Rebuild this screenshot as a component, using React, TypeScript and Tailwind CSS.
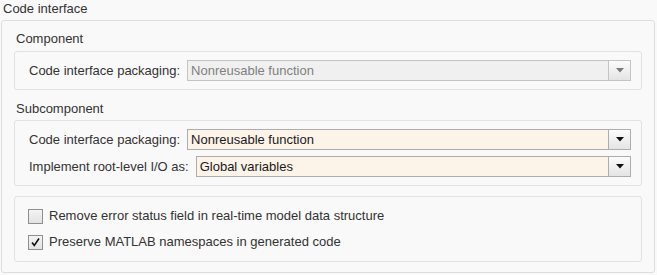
import React from 'react';

const Arrow: React.FC<{ disabled?: boolean }> = ({ disabled }) => (
  <svg width="8" height="5" viewBox="0 0 8 5">
    <polygon points="0,0 8,0 4,4.5" fill={disabled ? '#7a7a7a' : '#111'} />
  </svg>
);

const Dropdown: React.FC<{ value: string; disabled?: boolean }> = ({ value, disabled }) => (
  <div
    className={
      'flex flex-1 h-[21px] border ' +
      (disabled ? 'border-[#c4c4c4] bg-[#f0f0f0] text-[#7f7f7f]' : 'border-[#adadad] bg-[#fcf3e9] text-[#1a1a1a]')
    }
  >
    <div className="flex-1 pl-[3px] leading-[19px]">{value}</div>
    <div
      className={
        'w-[22px] flex items-center justify-center border-l bg-gradient-to-b from-[#fcfcfc] to-[#e4e4e4] ' +
        (disabled ? 'border-[#c4c4c4]' : 'border-[#adadad]')
      }
    >
      <Arrow disabled={disabled} />
    </div>
  </div>
);

const Row: React.FC<{ label: string; value: string; disabled?: boolean }> = ({ label, value, disabled }) => (
  <div className="flex items-center gap-[7px]">
    <span className="text-[#333]">{label}</span>
    <Dropdown value={value} disabled={disabled} />
  </div>
);

const Check: React.FC<{ checked?: boolean; label: string }> = ({ checked, label }) => (
  <div className="flex items-center h-[20px] gap-[6px]">
    <div className="w-[15px] h-[15px] border border-[#8f8f8f] bg-gradient-to-b from-[#f4f4f4] to-[#e2e2e2] flex items-center justify-center">
      {checked && (
        <svg width="11" height="11" viewBox="0 0 11 11">
          <path d="M2 5.5 L4.3 8.5 L9 1.5" stroke="#111" strokeWidth="1.6" fill="none" />
        </svg>
      )}
    </div>
    <span className="text-[#333]">{label}</span>
  </div>
);

const App: React.FC = () => {
  return (
    <div
      className="w-[657px] h-[275px] bg-[#f9f9f9] text-[13px] overflow-hidden"
      style={{ fontFamily: '"Liberation Sans", Arial, sans-serif' }}
    >
      <div className="pl-[3px] h-[20px] leading-[18px] text-[#333]">Code interface</div>
      <div className="ml-[1px] w-[654px] h-[253px] border border-[#dedede] rounded-[3px] px-3">
        {/* Component */}
        <div className="pt-[10px] pl-[2px] h-[26px] leading-[16px] mb-[4px] text-[#333]">Component</div>
        <div className="border border-[#e2e2e2] rounded-[3px] pl-[14px] pr-[10px] py-[8px]">
          <Row label="Code interface packaging:" value="Nonreusable function" disabled />
        </div>

        {/* Subcomponent */}
        <div className="mt-[11px] pl-[2px] h-[16px] leading-[16px] mb-[3px] text-[#333]">Subcomponent</div>
        <div className="border border-[#e2e2e2] rounded-[3px] pl-[14px] pr-[10px] py-[8px] flex flex-col gap-[6px]">
          <Row label="Code interface packaging:" value="Nonreusable function" />
          <Row label="Implement root-level I/O as:" value="Global variables" />
        </div>

        {/* Options */}
        <div className="mt-[10px] border border-[#e2e2e2] rounded-[3px] pl-[13px] py-[9px] flex flex-col gap-[6px]">
          <Check label="Remove error status field in real-time model data structure" />
          <Check checked label="Preserve MATLAB namespaces in generated code" />
        </div>
      </div>
    </div>
  );
};

export default App;
